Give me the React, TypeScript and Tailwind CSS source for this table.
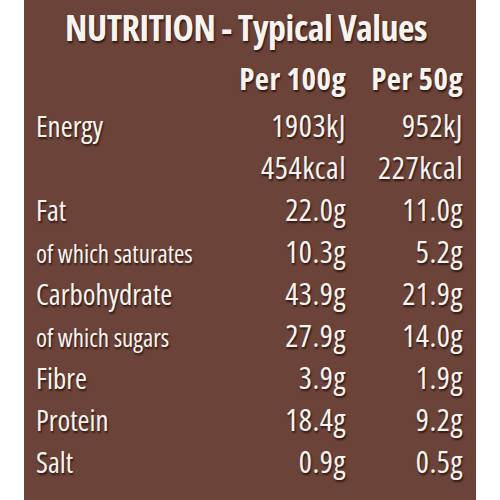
const rows: { label: string; a: string; b: string; sub?: boolean }[] = [
  { label: 'Energy', a: '1903kJ', b: '952kJ' },
  { label: '', a: '454kcal', b: '227kcal' },
  { label: 'Fat', a: '22.0g', b: '11.0g' },
  { label: 'of which saturates', a: '10.3g', b: '5.2g', sub: true },
  { label: 'Carbohydrate', a: '43.9g', b: '21.9g' },
  { label: 'of which sugars', a: '27.9g', b: '14.0g', sub: true },
  { label: 'Fibre', a: '3.9g', b: '1.9g' },
  { label: 'Protein', a: '18.4g', b: '9.2g' },
  { label: 'Salt', a: '0.9g', b: '0.5g' },
];

export default function App() {
  return (
    <div className="w-[500px] h-[500px] bg-white flex justify-center overflow-hidden">
      <div className="w-[452px] h-full bg-[#6c4339] text-[#f7f4f0] font-['Open_Sans',sans-serif] [font-stretch:75%] [text-shadow:1px_2px_2px_rgba(30,12,8,0.8)] pl-[12px] pr-[13px]">
        <div className="pl-[29px] pt-[2px] h-[52px] text-[36px] leading-[52px] font-bold tracking-[-0.5px] whitespace-nowrap">
          NUTRITION - Typical Values
        </div>
        <div className="grid grid-cols-[1fr_110px_117px] h-[52px] text-[31px] leading-[52px] font-bold tracking-[0.4px]">
          <div />
          <div className="text-right whitespace-nowrap">Per 100g</div>
          <div className="text-right whitespace-nowrap">Per 50g</div>
        </div>
        {rows.map((r, i) => (
          <div key={i} className="grid grid-cols-[1fr_110px_117px] h-[42px] leading-[42px] items-baseline">
            <div className={r.sub ? 'text-[25px] whitespace-nowrap' : 'text-[29px] whitespace-nowrap'}>
              {r.label}
            </div>
            <div className="text-right text-[31px] tracking-[0.5px] whitespace-nowrap">{r.a}</div>
            <div className="text-right text-[31px] tracking-[0.5px] whitespace-nowrap">{r.b}</div>
          </div>
        ))}
      </div>
    </div>
  );
}
